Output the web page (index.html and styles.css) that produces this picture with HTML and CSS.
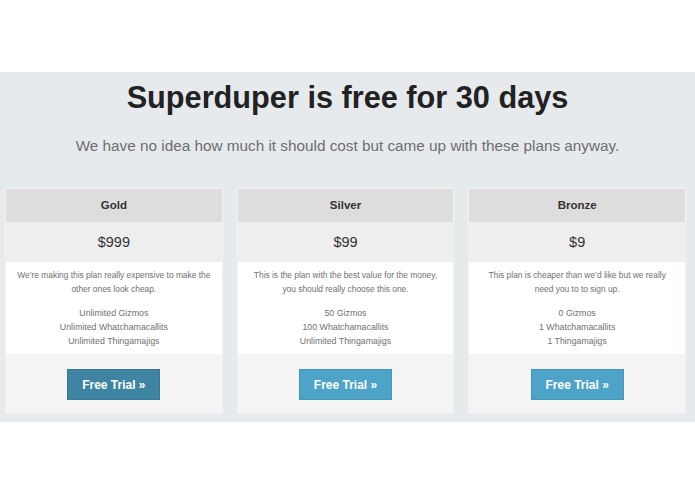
FILE: index.html
```html
<!DOCTYPE html>
<html>
<head>
<meta charset="utf-8">
<link rel="stylesheet" href="styles.css">
</head>
<body>
<section class="pricing">
  <h1 class="title">Superduper is free for 30 days</h1>
  <p class="lead">We have no idea how much it should cost but came up with these plans anyway.</p>
  <div class="plans">
    <div class="plan">
      <div class="plan-name">Gold</div>
      <div class="plan-price">$999</div>
      <div class="plan-body">
        <p class="desc">We’re making this plan really expensive to make the other ones look cheap.</p>
        <ul class="features">
          <li>Unlimited Gizmos</li>
          <li>Unlimited Whatchamacallits</li>
          <li>Unlimited Thingamajigs</li>
        </ul>
      </div>
      <div class="plan-foot"><a class="btn btn-dark">Free Trial »</a></div>
    </div>
    <div class="plan">
      <div class="plan-name">Silver</div>
      <div class="plan-price">$99</div>
      <div class="plan-body">
        <p class="desc">This is the plan with the best value for the money, you should really choose this one.</p>
        <ul class="features">
          <li>50 Gizmos</li>
          <li>100 Whatchamacallits</li>
          <li>Unlimited Thingamajigs</li>
        </ul>
      </div>
      <div class="plan-foot"><a class="btn">Free Trial »</a></div>
    </div>
    <div class="plan">
      <div class="plan-name">Bronze</div>
      <div class="plan-price">$9</div>
      <div class="plan-body">
        <p class="desc">This plan is cheaper than we’d like but we really need you to to sign up.</p>
        <ul class="features">
          <li>0 Gizmos</li>
          <li>1 Whatchamacallits</li>
          <li>1 Thingamajigs</li>
        </ul>
      </div>
      <div class="plan-foot"><a class="btn">Free Trial »</a></div>
    </div>
  </div>
</section>
</body>
</html>
```
FILE: styles.css
```css
* { box-sizing: border-box; }
html, body { margin: 0; padding: 0; background: #fff; }
body { font-family: "Liberation Sans", Arial, sans-serif; }

.pricing {
  margin-top: 72px;
  background: #e7eaed;
  padding: 10px 0 8px;
}
.title {
  margin: 0;
  text-align: center;
  font-size: 30.7px;
  line-height: 32px;
  font-weight: bold;
  color: #222;
}
.lead {
  margin: 21px 0 0;
  text-align: center;
  font-size: 15.3px;
  line-height: 22px;
  color: #6e6e6e;
}
.plans {
  display: grid;
  grid-template-columns: repeat(3, 1fr);
  gap: 14px;
  padding: 0 9px 0 5px;
  margin-top: 31px;
}
.plan {
  border: 1px solid #f1f2f3;
  display: flex;
  flex-direction: column;
}
.plan-name {
  background: #dddddd;
  height: 33px;
  line-height: 33px;
  text-align: center;
  font-weight: bold;
  font-size: 11.5px;
  color: #333;
}
.plan-price {
  background: #eeeeee;
  height: 40px;
  line-height: 40px;
  text-align: center;
  font-size: 14.5px;
  color: #333;
}
.plan-body {
  background: #fff;
  height: 92px;
  padding: 6px 10px 0;
  text-align: center;
  color: #707070;
  line-height: 14px;
}
.desc { margin: 0; font-size: 8.4px; }
.features {
  list-style: none;
  margin: 10px 0 0;
  padding: 0;
  font-size: 8.8px;
}
.plan-foot {
  background: #f4f4f4;
  height: 59px;
  display: flex;
  justify-content: center;
  align-items: flex-start;
  padding-top: 15px;
}
.btn {
  display: block;
  width: 93px;
  height: 31px;
  line-height: 30px;
  text-align: center;
  color: #fff;
  font-weight: bold;
  font-size: 12px;
  background: #4ea3c9;
  border: 1px solid #4596ba;
}
.btn-dark {
  background: #3f84a2;
  border-color: #397894;
}
```
